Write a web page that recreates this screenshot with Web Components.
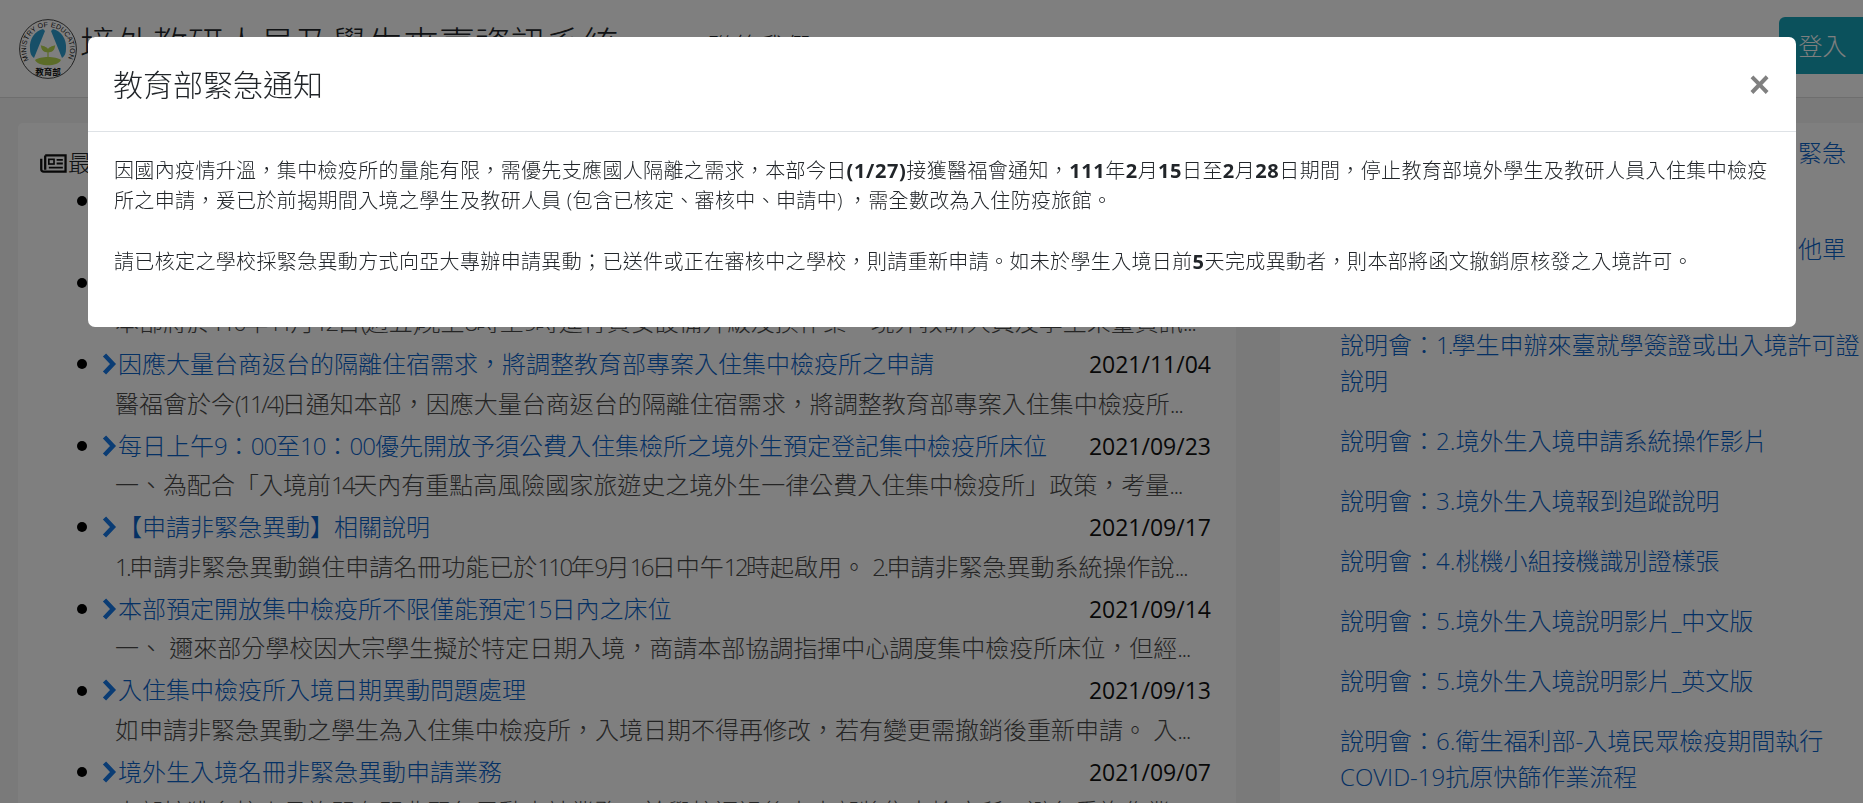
<!DOCTYPE html>
<html lang="zh-Hant">
<head>
<meta charset="utf-8">
<title>境外教研人員及學生來臺資訊系統</title>
<style>
  html, body { margin: 0; height: 100%; overflow: hidden; }
  body {
    background: #f5f5f5;
    color: #212529;
    font: 300 24px/36px "Open Sans", "Noto Sans CJK TC", sans-serif;
  }
  /* 原站的西文數字較窄 */
  .n { letter-spacing: -2.6px; }
  .t { letter-spacing: -1px; }
  .e { letter-spacing: -1.5px; }
  alert-modal b { font-weight: 700; letter-spacing: .6px; }
  .p { padding: 0 5px; }
</style>
</head>
<body>

<!-- 頁首 -->
<template id="tpl-header">
  <style>
    :host { display: flex; align-items: center; height: 97px; background: #fff; border-bottom: 1px solid #ddd; }
    svg { flex: none; margin: 0 3px 0 19px; }
    h1 { margin: 0; font-size: 36px; font-weight: 300; line-height: 54px; letter-spacing: -.1px; flex: none; position: relative; top: -4px; }
    nav { flex: 1; margin: 0 0 6px 90px; letter-spacing: 2px; }
    button {
      flex: none; align-self: flex-start; margin-top: 17px; width: 84px; height: 57px; padding: 0 0 0 3px;
      border: 0; border-radius: 6px 0 0 6px; background: #17a2b8; color: #fff;
      font: inherit;
    }
  </style>
  <svg width="58" height="60" viewBox="0 0 58 60">
    <ellipse cx="29" cy="30" rx="28.4" ry="29.4" fill="#fff" stroke="#444" stroke-width="1"/>
    <path id="ring" d="M10 41A22 22 0 1 1 48 41" fill="none"/>
    <text font-family="Liberation Sans, sans-serif" font-size="7" fill="#111"><textPath href="#ring" textLength="90" lengthAdjust="spacing">MINISTRY OF EDUCATION</textPath></text>
    <path d="M24 10C16 12 10 20 11 30C11 34 12 37 15 39L26 12Z" fill="#2f9fd0"/>
    <path d="M34 10C42 12 48 20 47 30C47 34 46 37 43 39L32 12Z" fill="#2f9fd0"/>
    <path d="M16 41C21 37 37 37 42 41C39 48 19 48 16 41Z" fill="#b8d850"/>
    <path d="M29 39V32C29 29 27 28 22.5 27C23 31 25 33 29 33C33 33 35 31 35.5 27C31 28 29 29 29 32" fill="#b8d850" stroke="#b8d850" stroke-width="1.2"/>
    <text x="29" y="56" text-anchor="middle" font-family="Noto Sans CJK TC, sans-serif" font-size="8.5" font-weight="700" fill="#111">教育部</text>
  </svg>
  <h1><slot name="title"></slot></h1>
  <nav><slot name="nav"></slot></nav>
  <button><slot name="action"></slot></button>
</template>

<!-- 卡片 -->
<template id="tpl-news-card">
  <style>
    :host { display: block; width: 1218px; height: 681px; flex: none; background: #fff; border-radius: 5px 5px 0 0; overflow: hidden; box-sizing: border-box; padding: 22px 0 0 22px; }
    .head { display: flex; align-items: center; height: 36px; }
    svg { flex: none; margin-right: 1px; }
    .list { padding: 0 25px 0 62px; }
  </style>
  <div class="head">
    <svg width="27" height="21" viewBox="0 0 26 20" fill="none" stroke="#111" stroke-width="2.2">
      <path d="M5 2.2H24.6V17.8H3.5C2 17.8 1.2 17 1.2 15.5V5.5"/>
      <path d="M5 2.2V16"/>
      <rect x="8.5" y="6" width="5" height="4.5" stroke-width="1.6"/>
      <path d="M16 6.5H22M16 10H22M8.5 14H22" stroke-width="1.7"/>
    </svg>
    <slot name="heading"></slot>
  </div>
  <div class="list"><slot></slot></div>
</template>

<!-- 消息列 -->
<template id="tpl-news-item">
  <style>
    :host { display: block; position: relative; height: 81.6px; color: #000; }
    :host::before { content: ""; position: absolute; left: -25px; top: 15px; width: 10px; height: 10px; border-radius: 50%; background: #000; }
    .row { display: flex; justify-content: space-between; align-items: center; height: 39.5px; }
    a { display: flex; align-items: center; color: #0a62c8; }
    svg { flex: none; margin-right: 1px; }
    time { font: 400 23px/36px "Open Sans", sans-serif; color: #111; }
    .desc { height: 42px; padding-left: 13px; line-height: 39px; white-space: nowrap; color: #4a4a4a; }
  </style>
  <div class="row">
    <a><svg width="15" height="24" viewBox="0 0 15 24"><path d="M2.5 3L11 12L2.5 21" fill="none" stroke="#1478e8" stroke-width="4.4"/></svg><slot name="title"></slot></a>
    <time><slot name="date"></slot></time>
  </div>
  <div class="desc"><slot></slot></div>
</template>

<!-- 右欄連結 -->
<template id="tpl-side-links">
  <style>
    :host { display: block; flex: 1; min-width: 0; margin-left: 44px; background: #fff; height: 681px; overflow: hidden; box-sizing: border-box; padding: 12px 0 0 60px; }
  </style>
  <slot></slot>
</template>
<template id="tpl-side-link">
  <style>
    :host { display: block; margin-bottom: 24px; color: #0a62c8; white-space: nowrap; }
  </style>
  <slot></slot>
</template>

<!-- 對話框 -->
<template id="tpl-modal">
  <style>
    :host { display: block; position: fixed; inset: 0; background: rgba(0, 0, 0, .5); z-index: 10; }
    .window { width: 1708px; height: 290px; box-sizing: border-box; margin: 37px 0 0 88px; background: #fff; border-radius: 7px; overflow: hidden; color: #212529; }
    header { display: flex; justify-content: space-between; align-items: center; height: 95px; box-sizing: border-box; padding: 0 26px 0 25px; border-bottom: 1px solid #dee2e6; }
    h5 { margin: 0; font-size: 30px; font-weight: 300; line-height: 45px; }
    .close { font: 700 36px/1 "Liberation Sans", sans-serif; color: #808080; position: relative; top: 1px; }
    .body { padding: 24px 26px 0; font-size: 20px; line-height: 30.4px; letter-spacing: .35px; white-space: nowrap; }
  </style>
  <div class="window">
    <header><h5><slot name="title"></slot></h5><span class="close">×</span></header>
    <div class="body"><slot></slot></div>
  </div>
</template>

<site-header>
  <span slot="title">境外教研人員及學生來臺資訊系統</span>
  <span slot="nav">聯絡我們</span>
  <span slot="action">登入</span>
</site-header>

<page-main style="display:flex;padding:25px 0 0 18px;width:1845px">
  <news-card>
    <span slot="heading">最新消息</span>
    <news-item></news-item>
    <news-item>本部將於<span class="n">110</span>年<span class="n">11</span>月<span class="n">12</span>日<span class="n">(</span>週五<span class="n">)</span>晚上<span class="n">8</span>時至<span class="n">9</span>時進行資安設備升級及換作業，境外教研人員及學生來臺資訊<span class="e">...</span></news-item>
    <news-item><span slot="title">因應大量台商返台的隔離住宿需求，將調整教育部專案入住集中檢疫所之申請</span><span slot="date">2021/11/04</span>醫福會於今<span class="n">(11/4)</span>日通知本部，因應大量台商返台的隔離住宿需求，將調整教育部專案入住集中檢疫所<span class="e">...</span></news-item>
    <news-item><span slot="title">每日上午<span class="t">9</span>：<span class="t">00</span>至<span class="t">10</span>：<span class="t">00</span>優先開放予須公費入住集檢所之境外生預定登記集中檢疫所床位</span><span slot="date">2021/09/23</span>一、為配合「入境前<span class="n">14</span>天內有重點高風險國家旅遊史之境外生一律公費入住集中檢疫所」政策，考量<span class="e">...</span></news-item>
    <news-item><span slot="title">【申請非緊急異動】相關說明</span><span slot="date">2021/09/17</span><span class="n">1.</span>申請非緊急異動鎖住申請名冊功能已於<span class="n">110</span>年<span class="n">9</span>月<span class="n">16</span>日中午<span class="n">12</span>時起啟用。 <span class="n">2.</span>申請非緊急異動系統操作說<span class="e">...</span></news-item>
    <news-item><span slot="title">本部預定開放集中檢疫所不限僅能預定<span class="t">15</span>日內之床位</span><span slot="date">2021/09/14</span>一、 邇來部分學校因大宗學生擬於特定日期入境，商請本部協調指揮中心調度集中檢疫所床位，但經<span class="e">...</span></news-item>
    <news-item><span slot="title">入住集中檢疫所入境日期異動問題處理</span><span slot="date">2021/09/13</span>如申請非緊急異動之學生為入住集中檢疫所，入境日期不得再修改，若有變更需撤銷後重新申請。 入<span class="e">...</span></news-item>
    <news-item><span slot="title">境外生入境名冊非緊急異動申請業務</span><span slot="date">2021/09/07</span>本部接獲多校人員詢問有關非緊急異動申請業務，於學校通過後由本部將集中檢疫所，避免重複作業<span class="e">...</span></news-item>
  </news-card>
  <side-links>
    <side-link style="padding-left:458px">緊急<br>&nbsp;</side-link>
    <side-link style="padding-left:458px">他單<br>&nbsp;</side-link>
    <side-link>說明會：<span style="letter-spacing:-2px">1.</span>學生申辦來臺就學簽證或出入境許可證<br>說明</side-link>
    <side-link>說明會：2.境外生入境申請系統操作影片</side-link>
    <side-link>說明會：3.境外生入境報到追蹤說明</side-link>
    <side-link>說明會：4.桃機小組接機識別證樣張</side-link>
    <side-link>說明會：5.境外生入境說明影片_中文版</side-link>
    <side-link>說明會：5.境外生入境說明影片_英文版</side-link>
    <side-link>說明會：6.衛生福利部-入境民眾檢疫期間執行<br>COVID-19抗原快篩作業流程</side-link>
  </side-links>
</page-main>

<alert-modal>
  <span slot="title">教育部緊急通知</span>
  因國內疫情升溫，集中檢疫所的量能有限，需優先支應國人隔離之需求，本部今日<b>(1/27)</b>接獲醫福會通知，<b>111</b>年<b>2</b>月<b>15</b>日至<b>2</b>月<b>28</b>日期間，停止教育部境外學生及教研人員入住集中檢疫<br>
  所之申請，爰已於前揭期間入境之學生及教研人員<span class="p">(包含已核定、審核中、申請中)</span>，需全數改為入住防疫旅館。<br>
  <br>
  請已核定之學校採緊急異動方式向亞大專辦申請異動；已送件或正在審核中之學校，則請重新申請。如未於學生入境日前<b>5</b>天完成異動者，則本部將函文撤銷原核發之入境許可。
</alert-modal>

<script>
  // 各元件共用同一個寫法：從 template 複製內容到 shadow root
  function register(tag, tplId) {
    customElements.define(tag, class extends HTMLElement {
      constructor() {
        super();
        this.attachShadow({ mode: 'open' }).appendChild(
          document.getElementById(tplId).content.cloneNode(true)
        );
      }
    });
  }
  register('site-header', 'tpl-header');
  register('news-card', 'tpl-news-card');
  register('news-item', 'tpl-news-item');
  register('side-links', 'tpl-side-links');
  register('side-link', 'tpl-side-link');
  register('alert-modal', 'tpl-modal');
</script>
</body>
</html>
